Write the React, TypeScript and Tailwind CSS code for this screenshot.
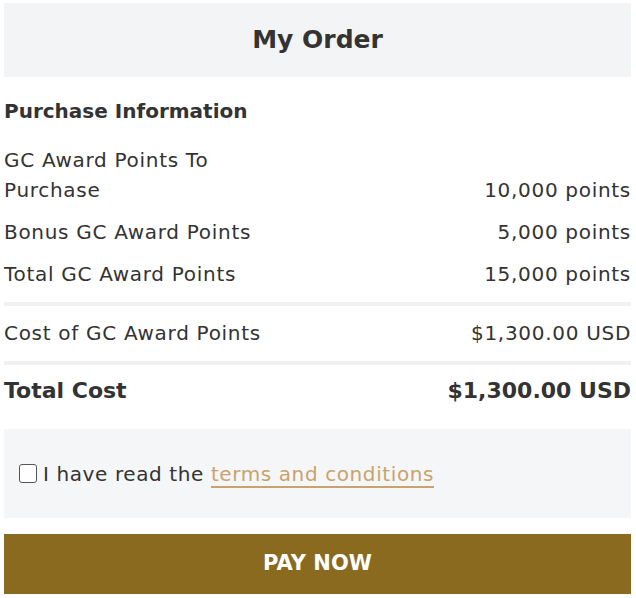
import React from "react"

const rows: { label: React.ReactNode; value: string }[] = [
  {
    label: (
      <>
        GC Award Points To
        <br />
        Purchase
      </>
    ),
    value: "10,000 points",
  },
  { label: "Bonus GC Award Points", value: "5,000 points" },
  { label: "Total GC Award Points", value: "15,000 points" },
]

function Row({ label, value }: { label: React.ReactNode; value: string }) {
  return (
    <div className="flex items-end justify-between py-1.5 text-[20px] leading-[30px] tracking-[0.7px]">
      <span>{label}</span>
      <span className="whitespace-nowrap">{value}</span>
    </div>
  )
}

function Divider() {
  return <div className="h-1 bg-[#f1f1f1]" />
}

export default function App() {
  return (
    <div
      className="min-h-[598px] bg-white pl-1 pr-[5px] pt-[3px] text-[#333333]"
      style={{ fontFamily: "'DejaVu Sans', sans-serif" }}
    >
      <div className="flex h-[74px] items-center justify-center bg-[#f3f4f6]">
        <h1 className="text-[25px] font-bold">My Order</h1>
      </div>

      <h2 className="mt-[19px] text-[20px] font-bold leading-[30px]">Purchase Information</h2>

      <div className="mt-[13px]">
        {rows.map((r) => (
          <Row key={r.value} {...r} />
        ))}
      </div>

      <div className="mt-[7px]">
        <Divider />
      </div>
      <div className="mt-1.5">
        <Row label="Cost of GC Award Points" value="$1,300.00 USD" />
      </div>
      <div className="mt-[7px]">
        <Divider />
      </div>

      <div className="mt-[5px] flex items-center justify-between py-1.5 text-[22px] font-bold leading-[30px]">
        <span>Total Cost</span>
        <span>$1,300.00 USD</span>
      </div>

      <div className="mt-[17px] flex h-[89px] items-center bg-[#f5f6f8] pl-[15px]">
        <label className="flex items-center gap-[6px] text-[20px] leading-[30px] tracking-[0.6px]">
          <span className="h-[19px] w-[18px] rounded-[3px] border border-[#555] bg-white" />
          <span>
            I have read the{" "}
            <a className="border-b-2 border-[#c9a36c] text-[#c9a36c]">terms and conditions</a>
          </span>
        </label>
      </div>

      <button className="mt-4 flex h-[60px] w-full items-center justify-center bg-[#8a6a1f] text-[21px] font-bold text-white">
        PAY NOW
      </button>
    </div>
  )
}
